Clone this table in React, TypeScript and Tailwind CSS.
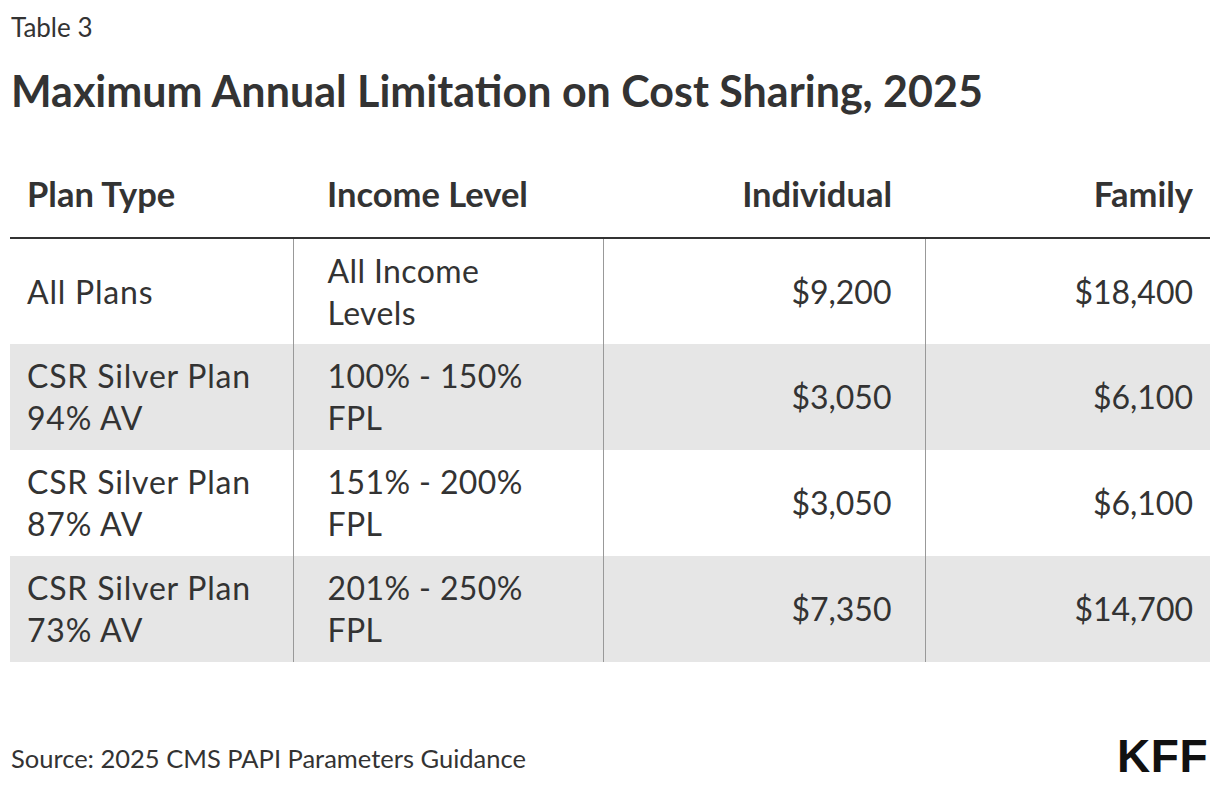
const rows = [
  { plan: ['All Plans'], income: ['All Income', 'Levels'], individual: '$9,200', family: '$18,400', shade: false },
  { plan: ['CSR Silver Plan', '94% AV'], income: ['100% - 150%', 'FPL'], individual: '$3,050', family: '$6,100', shade: true },
  { plan: ['CSR Silver Plan', '87% AV'], income: ['151% - 200%', 'FPL'], individual: '$3,050', family: '$6,100', shade: false },
  { plan: ['CSR Silver Plan', '73% AV'], income: ['201% - 250%', 'FPL'], individual: '$7,350', family: '$14,700', shade: true },
]

function Lines({ lines }: { lines: string[] }) {
  return (
    <>
      {lines.map((l, i) => (
        <div key={i}>{l}</div>
      ))}
    </>
  )
}

export default function App() {
  return (
    <div className="w-[1220px] h-[788px] bg-white text-[#333] font-['Lato',sans-serif] flex flex-col">
      <div className="pl-[11px] pt-[12px] h-[44px] text-[26px] leading-[30px]">Table 3</div>
      <h1 className="pl-[11px] mt-[22px] text-[43px] leading-[50px] font-bold">
        Maximum Annual Limitation on Cost Sharing, 2025
      </h1>

      <table className="mx-[10px] mt-[42px] w-[1200px] border-collapse table-fixed">
        <colgroup>
          <col className="w-[283px]" />
          <col className="w-[310px]" />
          <col className="w-[322px]" />
          <col className="w-[285px]" />
        </colgroup>
        <thead>
          <tr className="h-[80px] border-b-2 border-[#333] text-[34.5px] font-bold">
            <th className="pl-[17px] text-left align-middle pb-[7px]">Plan Type</th>
            <th className="pl-[34px] text-left align-middle pb-[7px]">Income Level</th>
            <th className="pr-[33px] text-right align-middle pb-[7px]">Individual</th>
            <th className="pr-[17px] text-right align-middle pb-[7px]">Family</th>
          </tr>
        </thead>
        <tbody className="text-[32px] leading-[42px]">
          {rows.map((r, i) => (
            <tr key={i} className={r.shade ? 'h-[106px] bg-[#e6e6e6]' : 'h-[106px]'}>
              <td className="pl-[17px] align-middle tracking-[0.8px]">
                <Lines lines={r.plan} />
              </td>
              <td className="pl-[34px] align-middle border-l border-[#999] tracking-[0.4px]">
                <Lines lines={r.income} />
              </td>
              <td className="pr-[33px] text-right align-middle border-l border-[#999]">{r.individual}</td>
              <td className="pr-[17px] text-right align-middle border-l border-[#999]">{r.family}</td>
            </tr>
          ))}
        </tbody>
      </table>

      <div className="mt-auto mb-[14px] flex items-end justify-between pl-[11px] pr-[12px]">
        <div className="text-[25.5px] leading-[30px] pb-[1px]">Source: 2025 CMS PAPI Parameters Guidance</div>
        <div className="text-[46px] leading-[36px] font-bold text-[#111] tracking-[0.5px] font-['Liberation_Sans',sans-serif]">
          KFF
        </div>
      </div>
    </div>
  )
}
